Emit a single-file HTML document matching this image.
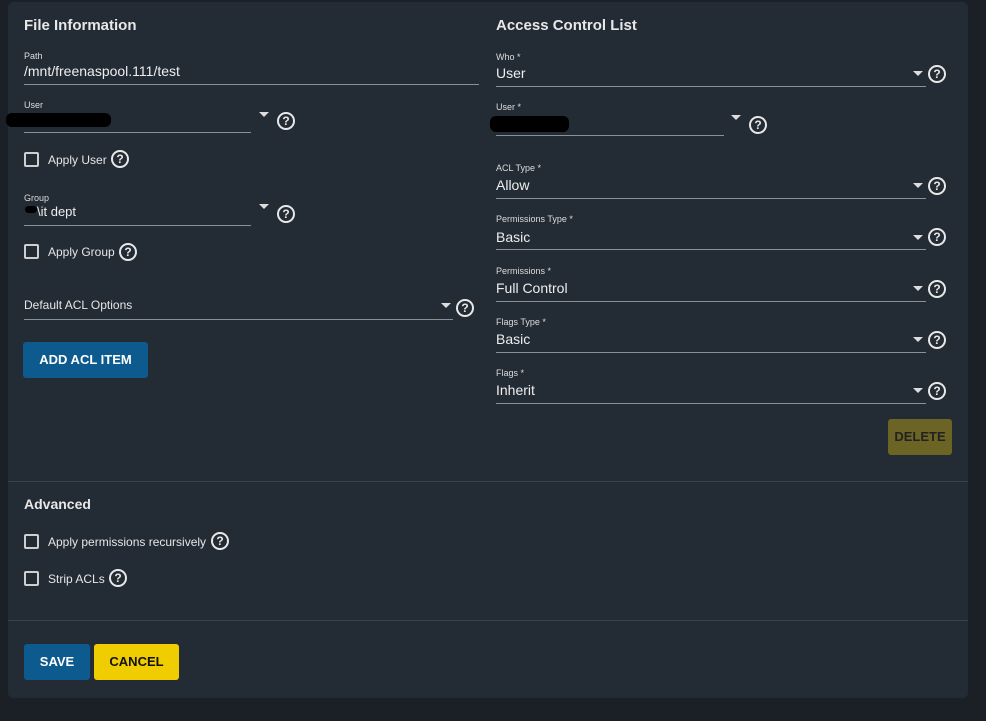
<!DOCTYPE html>
<html><head><style>
*{margin:0;padding:0;box-sizing:border-box}
body{width:986px;height:721px;background:#1b2027;font-family:"Liberation Sans",sans-serif;color:#e6e6e6;position:relative;overflow:hidden}
.card{position:absolute;left:8px;top:2px;width:960px;height:696px;background:#232b34;border-radius:5px}
.a{position:absolute;white-space:nowrap}
h2{position:absolute;font-size:15px;font-weight:bold;color:#e8e8e8}
.lab{font-size:9px;color:#ddd}
.val{font-size:14px;color:#eee}
.ul{position:absolute;height:1px;background:#8a9096}
.arr{position:absolute;width:0;height:0;border-left:5px solid transparent;border-right:5px solid transparent;border-top:5px solid #ddd}
.help{position:absolute;width:18px;height:18px;border:2px solid #e8e8e8;border-radius:50%;font-size:12px;font-weight:bold;text-align:center;line-height:14px;color:#e8e8e8}
.cb{position:absolute;width:15px;height:15px;border:2px solid #cfcfcf;border-radius:2px}
.div{position:absolute;left:8px;width:960px;height:1px;background:#3a424b}
.btn{position:absolute;font-size:13px;font-weight:bold;text-align:center;border-radius:3px}
.blob{position:absolute;background:#000;border-radius:6px}
</style></head><body>
<div class="card"></div>
<h2 style="left:24px;top:17px">File Information</h2>
<h2 style="left:496px;top:17px">Access Control List</h2>

<div class="a lab" style="left:24px;top:51px">Path</div>
<div class="a val" style="left:24px;top:63px">/mnt/freenaspool.111/test</div>
<div class="ul" style="left:24px;top:84px;width:455px"></div>

<div class="a lab" style="left:24px;top:100px">User</div>
<div class="blob" style="left:6px;top:113px;width:105px;height:14px"></div>
<div class="ul" style="left:24px;top:132px;width:227px"></div>
<div class="arr" style="left:259px;top:112px"></div>
<div class="help" style="left:277px;top:112px">?</div>

<div class="cb" style="left:24px;top:152px"></div>
<div class="a" style="left:48px;top:153px;font-size:12px">Apply User</div>
<div class="help" style="left:111px;top:150px">?</div>

<div class="a lab" style="left:24px;top:193px">Group</div>
<div class="blob" style="left:25px;top:206px;width:12px;height:7px"></div>
<div class="a val" style="left:37px;top:204px;font-size:13px">\it dept</div>
<div class="ul" style="left:24px;top:225px;width:227px"></div>
<div class="arr" style="left:259px;top:204px"></div>
<div class="help" style="left:277px;top:205px">?</div>

<div class="cb" style="left:24px;top:244px"></div>
<div class="a" style="left:48px;top:245px;font-size:12px">Apply Group</div>
<div class="help" style="left:119px;top:243px">?</div>

<div class="a" style="left:24px;top:298px;font-size:12px">Default ACL Options</div>
<div class="ul" style="left:24px;top:319px;width:429px"></div>
<div class="arr" style="left:441px;top:303px"></div>
<div class="help" style="left:456px;top:299px">?</div>

<div class="btn" style="left:23px;top:342px;width:125px;height:36px;line-height:36px;background:#0d5a8e;color:#fff">ADD ACL ITEM</div>

<div class="a lab" style="left:496px;top:52px">Who *</div>
<div class="a val" style="left:496px;top:65px">User</div>
<div class="ul" style="left:496px;top:86px;width:430px"></div>
<div class="arr" style="left:913px;top:71px"></div>
<div class="help" style="left:928px;top:65px">?</div>

<div class="a lab" style="left:496px;top:102px">User *</div>
<div class="blob" style="left:490px;top:116px;width:79px;height:16px"></div>
<div class="ul" style="left:496px;top:135px;width:228px"></div>
<div class="arr" style="left:731px;top:115px"></div>
<div class="help" style="left:749px;top:116px">?</div>

<div class="a lab" style="left:496px;top:163px">ACL Type *</div>
<div class="a val" style="left:496px;top:177px">Allow</div>
<div class="ul" style="left:496px;top:198px;width:430px"></div>
<div class="arr" style="left:913px;top:183px"></div>
<div class="help" style="left:928px;top:177px">?</div>

<div class="a lab" style="left:496px;top:214px">Permissions Type *</div>
<div class="a val" style="left:496px;top:229px">Basic</div>
<div class="ul" style="left:496px;top:249px;width:430px"></div>
<div class="arr" style="left:913px;top:235px"></div>
<div class="help" style="left:928px;top:228px">?</div>

<div class="a lab" style="left:496px;top:266px">Permissions *</div>
<div class="a val" style="left:496px;top:280px">Full Control</div>
<div class="ul" style="left:496px;top:301px;width:430px"></div>
<div class="arr" style="left:913px;top:286px"></div>
<div class="help" style="left:928px;top:280px">?</div>

<div class="a lab" style="left:496px;top:317px">Flags Type *</div>
<div class="a val" style="left:496px;top:331px">Basic</div>
<div class="ul" style="left:496px;top:352px;width:430px"></div>
<div class="arr" style="left:913px;top:337px"></div>
<div class="help" style="left:928px;top:331px">?</div>

<div class="a lab" style="left:496px;top:368px">Flags *</div>
<div class="a val" style="left:496px;top:382px">Inherit</div>
<div class="ul" style="left:496px;top:403px;width:430px"></div>
<div class="arr" style="left:913px;top:388px"></div>
<div class="help" style="left:928px;top:382px">?</div>

<div class="btn" style="left:888px;top:419px;width:64px;height:36px;line-height:36px;background:#6b6424;color:#222">DELETE</div>

<div class="div" style="top:481px"></div>
<h2 style="left:24px;top:496px;font-size:14px">Advanced</h2>
<div class="cb" style="left:24px;top:534px"></div>
<div class="a" style="left:48px;top:535px;font-size:12px">Apply permissions recursively</div>
<div class="help" style="left:211px;top:532px">?</div>
<div class="cb" style="left:24px;top:571px"></div>
<div class="a" style="left:48px;top:572px;font-size:12px">Strip ACLs</div>
<div class="help" style="left:109px;top:569px">?</div>

<div class="div" style="top:620px"></div>
<div class="btn" style="left:24px;top:644px;width:66px;height:36px;line-height:36px;background:#0d5a8e;color:#fff">SAVE</div>
<div class="btn" style="left:94px;top:644px;width:85px;height:36px;line-height:36px;background:#f0cd00;color:#111">CANCEL</div>
</body></html>
